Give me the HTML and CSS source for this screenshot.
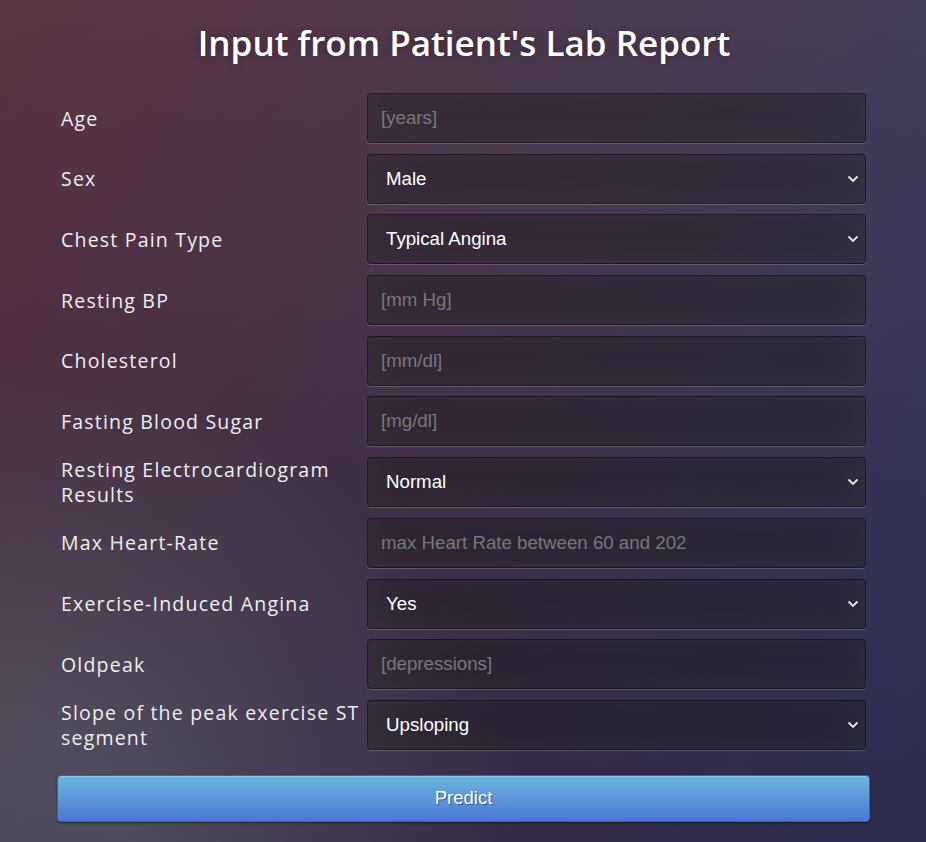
FILE: index.html
```
<!DOCTYPE html>
<html>
<head>
<meta charset="utf-8">
<link rel="stylesheet" href="styles.css">
</head>
<body>
<div class="page">
  <h1 class="title">Input from Patient's Lab Report</h1>
  <form class="form">
    <label class="label">Age</label>
    <input class="field" type="text" placeholder="[years]">
    <label class="label">Sex</label>
    <div class="select"><span>Male</span><svg class="chev" viewBox="0 0 12 8"><path d="M1.5 1.5 L6 6 L10.5 1.5" fill="none" stroke="#e6e6e6" stroke-width="1.9"/></svg></div>
    <label class="label">Chest Pain Type</label>
    <div class="select"><span>Typical Angina</span><svg class="chev" viewBox="0 0 12 8"><path d="M1.5 1.5 L6 6 L10.5 1.5" fill="none" stroke="#e6e6e6" stroke-width="1.9"/></svg></div>
    <label class="label">Resting BP</label>
    <input class="field" type="text" placeholder="[mm Hg]">
    <label class="label">Cholesterol</label>
    <input class="field" type="text" placeholder="[mm/dl]">
    <label class="label">Fasting Blood Sugar</label>
    <input class="field" type="text" placeholder="[mg/dl]">
    <label class="label">Resting Electrocardiogram Results</label>
    <div class="select"><span>Normal</span><svg class="chev" viewBox="0 0 12 8"><path d="M1.5 1.5 L6 6 L10.5 1.5" fill="none" stroke="#e6e6e6" stroke-width="1.9"/></svg></div>
    <label class="label">Max Heart-Rate</label>
    <input class="field" type="text" placeholder="max Heart Rate between 60 and 202">
    <label class="label">Exercise-Induced Angina</label>
    <div class="select"><span>Yes</span><svg class="chev" viewBox="0 0 12 8"><path d="M1.5 1.5 L6 6 L10.5 1.5" fill="none" stroke="#e6e6e6" stroke-width="1.9"/></svg></div>
    <label class="label">Oldpeak</label>
    <input class="field" type="text" placeholder="[depressions]">
    <label class="label">Slope of the peak exercise ST segment</label>
    <div class="select"><span>Upsloping</span><svg class="chev" viewBox="0 0 12 8"><path d="M1.5 1.5 L6 6 L10.5 1.5" fill="none" stroke="#e6e6e6" stroke-width="1.9"/></svg></div>
  </form>
  <button class="btn" type="button">Predict</button>
</div>
</body>
</html>
```
FILE: styles.css
```
html, body {
  margin: 0;
  padding: 0;
  height: 100%;
}
body {
  background-color: #2c2247;
  background-image:
    radial-gradient(ellipse farthest-corner at 0% 100%, rgba(104,128,138,.4) 10%, rgba(138,114,76,0) 40%),
    linear-gradient(to bottom, rgba(57,173,219,.25) 0%, rgba(42,60,87,.4) 100%),
    linear-gradient(135deg, #670d10 0%, #2c2247 100%);
  font-family: "Open Sans", sans-serif;
  color: #fff;
  overflow: hidden;
}
.page {
  width: 812px;
  margin: 0 auto;
  padding-top: 19px;
  transform: translateX(1px);
}
.title {
  margin: 0 0 26px;
  text-align: center;
  font-size: 35px;
  font-weight: 600;
  line-height: 48px;
  color: #fff;
  text-shadow: 0 0 10px rgba(0,0,0,0.3);
}
.form {
  display: grid;
  grid-template-columns: 303px 499px;
  column-gap: 3px;
  row-gap: 10.7px;
  align-items: center;
  padding-left: 3px;
}
.label {
  font-size: 19.5px;
  letter-spacing: 1.2px;
  line-height: 25px;
  color: #eee;
}
.field, .select {
  box-sizing: border-box;
  height: 50px;
  width: 100%;
  margin: 0;
  background: rgba(0,0,0,0.3);
  border: 1px solid rgba(0,0,0,0.3);
  border-radius: 4px;
  box-shadow: inset 0 -5px 45px rgba(100,100,100,0.2), 0 1px 1px rgba(255,255,255,0.2);
  font-family: "Liberation Sans", Arial, sans-serif;
  font-size: 18.7px;
  color: #fff;
  outline: none;
}
.field {
  padding: 0 13px;
}
.field::placeholder {
  color: #777;
}
.select {
  display: flex;
  align-items: center;
  justify-content: space-between;
  padding: 0 6px 0 18px;
}
.chev {
  width: 12px;
  height: 8px;
}
.btn {
  display: block;
  box-sizing: border-box;
  width: 813px;
  height: 47px;
  margin: 25px 0 0 -1px;
  background-color: #4a77d4;
  background-image: linear-gradient(to bottom, #6eb6de, #4a77d4);
  border: 1px solid #3762bc;
  border-radius: 4px;
  box-shadow: inset 0 1px 0 rgba(255,255,255,.2), 0 1px 2px rgba(0,0,0,.5);
  text-shadow: 1px 1px 1px rgba(0,0,0,0.4);
  font-family: "Liberation Sans", Arial, sans-serif;
  font-size: 18.5px;
  color: #fff;
}
```
